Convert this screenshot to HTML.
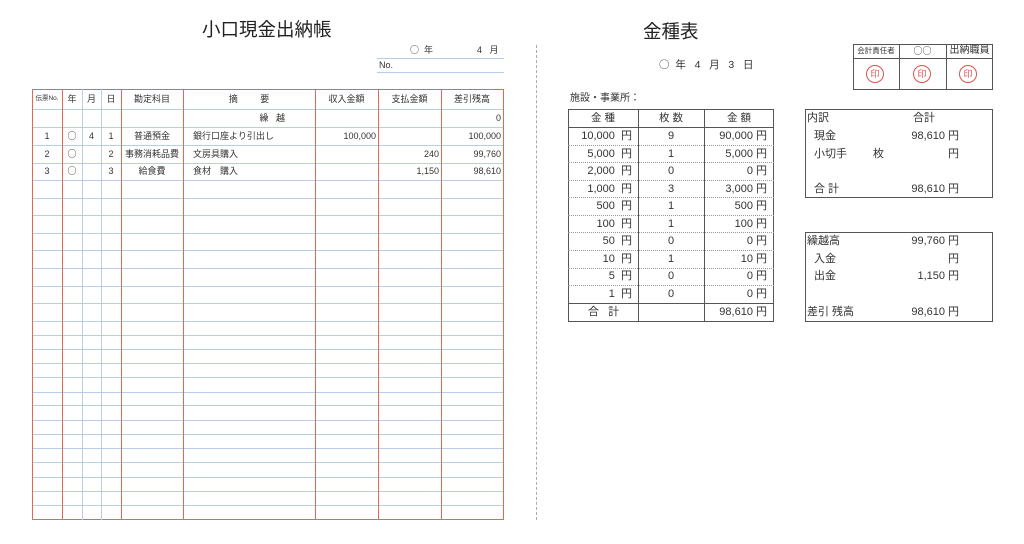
<!DOCTYPE html>
<html><head><meta charset="utf-8"><style>
*{margin:0;padding:0;box-sizing:border-box}
body{width:1024px;height:544px;background:#fff;position:relative;overflow:hidden;font-family:"Liberation Sans","Noto Sans CJK JP",sans-serif;color:#333}
.a{position:absolute}
.h{position:absolute;height:1px}
.v{position:absolute;width:1px}
.t{position:absolute;font-size:9px;line-height:12px;white-space:nowrap;text-align:center}
.r{text-align:right}
.l{text-align:left}
.s{position:absolute;font-size:11px;line-height:14px;white-space:nowrap}
.c{font-family:"Noto Sans CJK JP",sans-serif}
.stamp{position:absolute;width:18px;height:18px;border:1px solid #d9534f;border-radius:50%;color:#d9534f;font-size:9px;line-height:16px;text-align:center}
</style></head><body>

<div class="a" style="left:202px;top:16px;font-size:18.5px;color:#222">小口現金出納帳</div>
<div class="a" style="left:643px;top:18px;font-size:18.5px;color:#222">金種表</div>

<div class="t" style="left:410px;top:44px;font-size:9px"><span class="c">○</span>&nbsp;&nbsp;年</div>
<div class="t" style="left:477px;top:44px;font-size:9px">4&nbsp;&nbsp;&nbsp;月</div>
<div class="h" style="left:377px;top:58px;width:127px;background:#b8cde8"></div>
<div class="t" style="left:379px;top:59px;font-size:9px">No.</div>
<div class="h" style="left:377px;top:72px;width:127px;background:#b8cde8"></div>

<div class="h" style="left:32px;top:89px;width:472px;background:#e06a4a"></div>
<div class="h" style="left:32px;top:109px;width:472px;background:#b8cde8"></div>
<div class="h" style="left:32px;top:127px;width:472px;background:#b8cde8"></div>
<div class="h" style="left:32px;top:145px;width:472px;background:#b8cde8"></div>
<div class="h" style="left:32px;top:163px;width:472px;background:#b8cde8"></div>
<div class="h" style="left:32px;top:180px;width:472px;background:#b8cde8"></div>
<div class="h" style="left:32px;top:198px;width:472px;background:#b8cde8"></div>
<div class="h" style="left:32px;top:215px;width:472px;background:#b8cde8"></div>
<div class="h" style="left:32px;top:233px;width:472px;background:#b8cde8"></div>
<div class="h" style="left:32px;top:250px;width:472px;background:#b8cde8"></div>
<div class="h" style="left:32px;top:268px;width:472px;background:#b8cde8"></div>
<div class="h" style="left:32px;top:286px;width:472px;background:#b8cde8"></div>
<div class="h" style="left:32px;top:303px;width:472px;background:#b8cde8"></div>
<div class="h" style="left:32px;top:321px;width:472px;background:#b8cde8"></div>
<div class="h" style="left:32px;top:335px;width:472px;background:#b8cde8"></div>
<div class="h" style="left:32px;top:349px;width:472px;background:#b8cde8"></div>
<div class="h" style="left:32px;top:363px;width:472px;background:#b8cde8"></div>
<div class="h" style="left:32px;top:377px;width:472px;background:#b8cde8"></div>
<div class="h" style="left:32px;top:392px;width:472px;background:#b8cde8"></div>
<div class="h" style="left:32px;top:405px;width:472px;background:#b8cde8"></div>
<div class="h" style="left:32px;top:420px;width:472px;background:#b8cde8"></div>
<div class="h" style="left:32px;top:434px;width:472px;background:#b8cde8"></div>
<div class="h" style="left:32px;top:448px;width:472px;background:#b8cde8"></div>
<div class="h" style="left:32px;top:462px;width:472px;background:#b8cde8"></div>
<div class="h" style="left:32px;top:477px;width:472px;background:#b8cde8"></div>
<div class="h" style="left:32px;top:491px;width:472px;background:#b8cde8"></div>
<div class="h" style="left:32px;top:505px;width:472px;background:#b8cde8"></div>
<div class="h" style="left:32px;top:519px;width:472px;background:#e06a4a"></div>
<div class="v" style="left:32px;top:89px;height:431px;background:#e06a4a"></div>
<div class="v" style="left:62px;top:89px;height:431px;background:#e06a4a"></div>
<div class="v" style="left:82px;top:89px;height:431px;background:#b8cde8"></div>
<div class="v" style="left:101px;top:89px;height:431px;background:#b8cde8"></div>
<div class="v" style="left:121px;top:89px;height:431px;background:#e06a4a"></div>
<div class="v" style="left:183px;top:89px;height:431px;background:#e06a4a"></div>
<div class="v" style="left:315px;top:89px;height:431px;background:#e06a4a"></div>
<div class="v" style="left:378px;top:89px;height:431px;background:#e06a4a"></div>
<div class="v" style="left:441px;top:89px;height:431px;background:#e06a4a"></div>
<div class="v" style="left:503px;top:89px;height:431px;background:#e06a4a"></div>

<div class="t" style="left:32px;width:30px;top:93px;font-size:6.5px">伝票No.</div>
<div class="t" style="left:62px;width:20px;top:93px">年</div>
<div class="t" style="left:82px;width:19px;top:93px">月</div>
<div class="t" style="left:101px;width:20px;top:93px">日</div>
<div class="t" style="left:121px;width:62px;top:93px">勘定科目</div>
<div class="t" style="left:183px;width:132px;top:93px">摘&nbsp;&nbsp;&nbsp;&nbsp;&nbsp;&nbsp;&nbsp;&nbsp;&nbsp;要</div>
<div class="t" style="left:315px;width:63px;top:93px">収入金額</div>
<div class="t" style="left:378px;width:63px;top:93px">支払金額</div>
<div class="t" style="left:441px;width:62px;top:93px">差引残高</div>

<div class="t r" style="left:183px;width:102px;top:112px">繰&nbsp;&nbsp;&nbsp;越</div>
<div class="t r" style="left:441px;width:60px;top:112px">0</div>

<div class="t" style="left:32px;width:30px;top:130px">1</div>
<div class="t c" style="left:62px;width:20px;top:130px">○</div>
<div class="t" style="left:82px;width:19px;top:130px">4</div>
<div class="t" style="left:101px;width:20px;top:130px">1</div>
<div class="t" style="left:121px;width:62px;top:130px">普通預金</div>
<div class="t l" style="left:193px;top:130px">銀行口座より引出し</div>
<div class="t r" style="left:315px;width:61px;top:130px">100,000</div>
<div class="t r" style="left:441px;width:60px;top:130px">100,000</div>

<div class="t" style="left:32px;width:30px;top:148px">2</div>
<div class="t c" style="left:62px;width:20px;top:148px">○</div>
<div class="t" style="left:101px;width:20px;top:148px">2</div>
<div class="t" style="left:121px;width:62px;top:148px">事務消耗品費</div>
<div class="t l" style="left:193px;top:148px">文房具購入</div>
<div class="t r" style="left:378px;width:61px;top:148px">240</div>
<div class="t r" style="left:441px;width:60px;top:148px">99,760</div>

<div class="t" style="left:32px;width:30px;top:165px">3</div>
<div class="t c" style="left:62px;width:20px;top:165px">○</div>
<div class="t" style="left:101px;width:20px;top:165px">3</div>
<div class="t" style="left:121px;width:62px;top:165px">給食費</div>
<div class="t l" style="left:193px;top:165px">食材　購入</div>
<div class="t r" style="left:378px;width:61px;top:165px">1,150</div>
<div class="t r" style="left:441px;width:60px;top:165px">98,610</div>

<div class="a" style="left:536px;top:45px;height:475px;border-left:1px dashed #aaa"></div>

<div class="a" style="left:853px;top:44px;width:140px;height:46px;border:1px solid #555"></div>
<div class="h" style="left:853px;top:58px;width:140px;background:#555"></div>
<div class="v" style="left:899px;top:44px;height:46px;background:#555"></div>
<div class="v" style="left:946px;top:44px;height:46px;background:#555"></div>
<div class="t" style="left:853px;width:46px;top:45px;font-size:7.5px">会計責任者</div>
<div class="t c" style="left:899px;width:47px;top:45px;font-size:9px">○○</div>
<div class="t" style="left:946px;width:47px;top:45px;font-size:10px">出納職員</div>
<div class="stamp" style="left:866px;top:65px">印</div>
<div class="stamp" style="left:913px;top:65px">印</div>
<div class="stamp" style="left:959px;top:65px">印</div>

<div class="s" style="left:659px;top:58px;font-size:10.5px"><span class="c">○</span>&nbsp;&nbsp;年&nbsp;&nbsp;&nbsp;4&nbsp;&nbsp;&nbsp;月&nbsp;&nbsp;&nbsp;3&nbsp;&nbsp;&nbsp;日</div>
<div class="s" style="left:570px;top:92px;font-size:10px">施設・事業所：</div>

<div class="a" style="left:568px;top:109px;width:206px;height:213px;border:1px solid #555"></div>
<div class="v" style="left:638px;top:109px;height:213px;background:#555"></div>
<div class="v" style="left:704px;top:109px;height:213px;background:#555"></div>
<div class="h" style="left:568px;top:127px;width:206px;background:#555"></div>
<div class="a" style="left:568px;top:145px;width:206px;border-top:1px dotted #999"></div>
<div class="a" style="left:568px;top:162px;width:206px;border-top:1px dotted #999"></div>
<div class="a" style="left:568px;top:180px;width:206px;border-top:1px dotted #999"></div>
<div class="a" style="left:568px;top:197px;width:206px;border-top:1px dotted #999"></div>
<div class="a" style="left:568px;top:215px;width:206px;border-top:1px dotted #999"></div>
<div class="a" style="left:568px;top:232px;width:206px;border-top:1px dotted #999"></div>
<div class="a" style="left:568px;top:250px;width:206px;border-top:1px dotted #999"></div>
<div class="a" style="left:568px;top:268px;width:206px;border-top:1px dotted #999"></div>
<div class="a" style="left:568px;top:285px;width:206px;border-top:1px dotted #999"></div>
<div class="h" style="left:568px;top:303px;width:206px;background:#555"></div>

<div class="s" style="left:568px;width:70px;top:111px;text-align:center;font-size:10.5px">金 種</div>
<div class="s" style="left:638px;width:66px;top:111px;text-align:center;font-size:10.5px">枚 数</div>
<div class="s" style="left:704px;width:70px;top:111px;text-align:center;font-size:10.5px">金 額</div>

<div class="s r" style="left:568px;width:64px;top:129px">10,000 &nbsp;円</div><div class="s" style="left:638px;width:66px;top:129px;text-align:center">9</div><div class="s r" style="left:704px;width:63px;top:129px">90,000 円</div>
<div class="s r" style="left:568px;width:64px;top:147px">5,000 &nbsp;円</div><div class="s" style="left:638px;width:66px;top:147px;text-align:center">1</div><div class="s r" style="left:704px;width:63px;top:147px">5,000 円</div>
<div class="s r" style="left:568px;width:64px;top:164px">2,000 &nbsp;円</div><div class="s" style="left:638px;width:66px;top:164px;text-align:center">0</div><div class="s r" style="left:704px;width:63px;top:164px">0 円</div>
<div class="s r" style="left:568px;width:64px;top:182px">1,000 &nbsp;円</div><div class="s" style="left:638px;width:66px;top:182px;text-align:center">3</div><div class="s r" style="left:704px;width:63px;top:182px">3,000 円</div>
<div class="s r" style="left:568px;width:64px;top:199px">500 &nbsp;円</div><div class="s" style="left:638px;width:66px;top:199px;text-align:center">1</div><div class="s r" style="left:704px;width:63px;top:199px">500 円</div>
<div class="s r" style="left:568px;width:64px;top:217px">100 &nbsp;円</div><div class="s" style="left:638px;width:66px;top:217px;text-align:center">1</div><div class="s r" style="left:704px;width:63px;top:217px">100 円</div>
<div class="s r" style="left:568px;width:64px;top:234px">50 &nbsp;円</div><div class="s" style="left:638px;width:66px;top:234px;text-align:center">0</div><div class="s r" style="left:704px;width:63px;top:234px">0 円</div>
<div class="s r" style="left:568px;width:64px;top:252px">10 &nbsp;円</div><div class="s" style="left:638px;width:66px;top:252px;text-align:center">1</div><div class="s r" style="left:704px;width:63px;top:252px">10 円</div>
<div class="s r" style="left:568px;width:64px;top:269px">5 &nbsp;円</div><div class="s" style="left:638px;width:66px;top:269px;text-align:center">0</div><div class="s r" style="left:704px;width:63px;top:269px">0 円</div>
<div class="s r" style="left:568px;width:64px;top:287px">1 &nbsp;円</div><div class="s" style="left:638px;width:66px;top:287px;text-align:center">0</div><div class="s r" style="left:704px;width:63px;top:287px">0 円</div>
<div class="s" style="left:588px;top:305px">合&nbsp;&nbsp;&nbsp;計</div><div class="s r" style="left:704px;width:63px;top:305px">98,610 円</div>

<div class="a" style="left:805px;top:109px;width:188px;height:89px;border:1px solid #555"></div>
<div class="s" style="left:807px;top:111px">内訳</div>
<div class="s" style="left:913px;top:111px">合計</div>
<div class="s" style="left:814px;top:129px">現金</div><div class="s r" style="left:880px;width:65px;top:129px">98,610</div><div class="s" style="left:948px;top:129px">円</div>
<div class="s" style="left:814px;top:147px">小切手</div><div class="s" style="left:873px;top:147px">枚</div><div class="s" style="left:948px;top:147px">円</div>
<div class="s" style="left:814px;top:182px">合&nbsp;計</div><div class="s r" style="left:880px;width:65px;top:182px">98,610</div><div class="s" style="left:948px;top:182px">円</div>

<div class="a" style="left:805px;top:232px;width:188px;height:90px;border:1px solid #555"></div>
<div class="s" style="left:807px;top:234px">繰越高</div><div class="s r" style="left:880px;width:65px;top:234px">99,760</div><div class="s" style="left:948px;top:234px">円</div>
<div class="s" style="left:814px;top:252px">入金</div><div class="s" style="left:948px;top:252px">円</div>
<div class="s" style="left:814px;top:269px">出金</div><div class="s r" style="left:880px;width:65px;top:269px">1,150</div><div class="s" style="left:948px;top:269px">円</div>
<div class="s" style="left:807px;top:305px">差引&nbsp;残高</div><div class="s r" style="left:880px;width:65px;top:305px">98,610</div><div class="s" style="left:948px;top:305px">円</div>

</body></html>
